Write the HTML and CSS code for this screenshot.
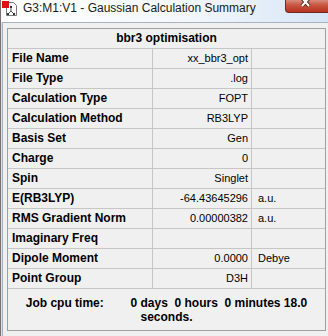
FILE: index.html
```html
<!DOCTYPE html>
<html lang="en">
<head>
    <meta charset="UTF-8">
    <title>G3:M1:V1 - Gaussian Calculation Summary</title>
<link rel="stylesheet" href="styles.css">
</head>
<body>
    <div class="window">
        <div class="titlebar">
            <svg class="app-icon" width="16" height="16" viewBox="0 0 16 16">
                <path d="M4.5 1.5h7l3 3v10h-10z" fill="#fff" stroke="#7a7a7a"/>
                <rect x="0" y="0" width="7" height="7" fill="#e01010"/>
                <path d="M9 6v4M9 10l-3 3M9 10l3 3" stroke="#555" stroke-width="1" fill="none"/>
                <rect x="8" y="5" width="2" height="2" fill="#333"/>
                <rect x="5" y="12" width="2" height="2" fill="#333"/>
                <rect x="11" y="12" width="2" height="2" fill="#333"/>
            </svg>
            <span class="title">G3:M1:V1 - Gaussian Calculation Summary</span>
            <div class="close-btn">
                <svg width="14" height="10" viewBox="0 0 14 10">
                    <path d="M2 -2L9 6M9 -2L2 6" stroke="#5a2a22" stroke-width="4" fill="none"/>
                    <path d="M2 -2L9 6M9 -2L2 6" stroke="#fff" stroke-width="2" fill="none"/>
                </svg>
            </div>
        </div>

        <div class="client">
            <div class="panel">
                <div class="summary">
                    <div class="heading">bbr3 optimisation</div>

                    <div class="label">File Name</div><div class="value">xx_bbr3_opt</div><div class="unit"></div>
                    <div class="label">File Type</div><div class="value">.log</div><div class="unit"></div>
                    <div class="label">Calculation Type</div><div class="value">FOPT</div><div class="unit"></div>
                    <div class="label">Calculation Method</div><div class="value">RB3LYP</div><div class="unit"></div>
                    <div class="label">Basis Set</div><div class="value">Gen</div><div class="unit"></div>
                    <div class="label">Charge</div><div class="value">0</div><div class="unit"></div>
                    <div class="label">Spin</div><div class="value">Singlet</div><div class="unit"></div>
                    <div class="label">E(RB3LYP)</div><div class="value">-64.43645296</div><div class="unit">a.u.</div>
                    <div class="label">RMS Gradient Norm</div><div class="value">0.00000382</div><div class="unit">a.u.</div>
                    <div class="label">Imaginary Freq</div><div class="value"></div><div class="unit"></div>
                    <div class="label">Dipole Moment</div><div class="value">0.0000</div><div class="unit">Debye</div>
                    <div class="label">Point Group</div><div class="value">D3H</div><div class="unit"></div>
                </div>
                <p class="cpu-time">Job cpu time:        0 days  0 hours  0 minutes 18.0 seconds.</p>
            </div>
        </div>
    </div>
</body>
</html>
```

FILE: styles.css
```css
:root {
    --frame-color: #d3e2f3;
    --face-color: #f0f0f0;
    --outer-line: #a0a0a0;
    --grid-line: #c6c6c6;
}

body {
    margin: 0;
    width: 328px;
    height: 336px;
    overflow: hidden;
    background: var(--frame-color);
    font-family: "Liberation Sans", Arial, sans-serif;
    color: #000;
}

.window {
    height: 336px;
    border-left: 1px solid #7b6f70;
    box-sizing: border-box;
}

.titlebar {
    height: 22px;
    display: flex;
    align-items: flex-start;
    background: linear-gradient(to right, #ffffff 0%, #f4f8fc 55%, #d6e5f5 100%);
}

.app-icon {
    margin: 1px 0 0 1px;
    flex-shrink: 0;
}

.title {
    margin: 1px 0 0 5px;
    font-size: 12px;
    line-height: 15px;
    color: #1a1a1a;
    white-space: nowrap;
}

.close-btn {
    margin-left: auto;
    width: 43px;
    height: 13px;
    box-sizing: border-box;
    border: 1px solid #6d2a22;
    border-top: none;
    border-right: none;
    border-radius: 0 0 0 4px;
    background: linear-gradient(to bottom, #d98a7c 0%, #c7543f 45%, #b8331f 100%);
    display: flex;
    justify-content: center;
    align-items: flex-start;
}

.client {
    margin-left: 1px;
    height: 314px;
    background: var(--face-color);
    border-top: 1px solid #a9b3bf;
    border-left: 1px solid #a9b3bf;
    padding: 5px 0 0 4px;
}

.panel {
    width: 319px;
    height: 303px;
    box-sizing: border-box;
    border: 1px solid var(--outer-line);
}

.summary {
    display: grid;
    grid-template-columns: 144px 99px 74px;
    grid-auto-rows: 20px;
}

.summary > div {
    box-sizing: border-box;
    border-bottom: 1px solid var(--grid-line);
    font-size: 12px;
    line-height: 19px;
    white-space: nowrap;
    overflow: hidden;
}

.heading {
    grid-column: 1 / 4;
    text-align: center;
    font-weight: bold;
}

.label {
    padding-left: 4px;
    font-weight: bold;
}

.value {
    border-left: 1px solid var(--grid-line);
    text-align: right;
    padding-right: 3px;
    font-size: 11px !important;
}

.unit {
    border-left: 1px solid var(--grid-line);
    padding-left: 6px;
    font-size: 11px !important;
}

.cpu-time {
    margin: 0;
    padding: 7px 12px 0;
    font-size: 12px;
    line-height: 14px;
    font-weight: bold;
    text-align: center;
    white-space: pre-wrap;
}
```
